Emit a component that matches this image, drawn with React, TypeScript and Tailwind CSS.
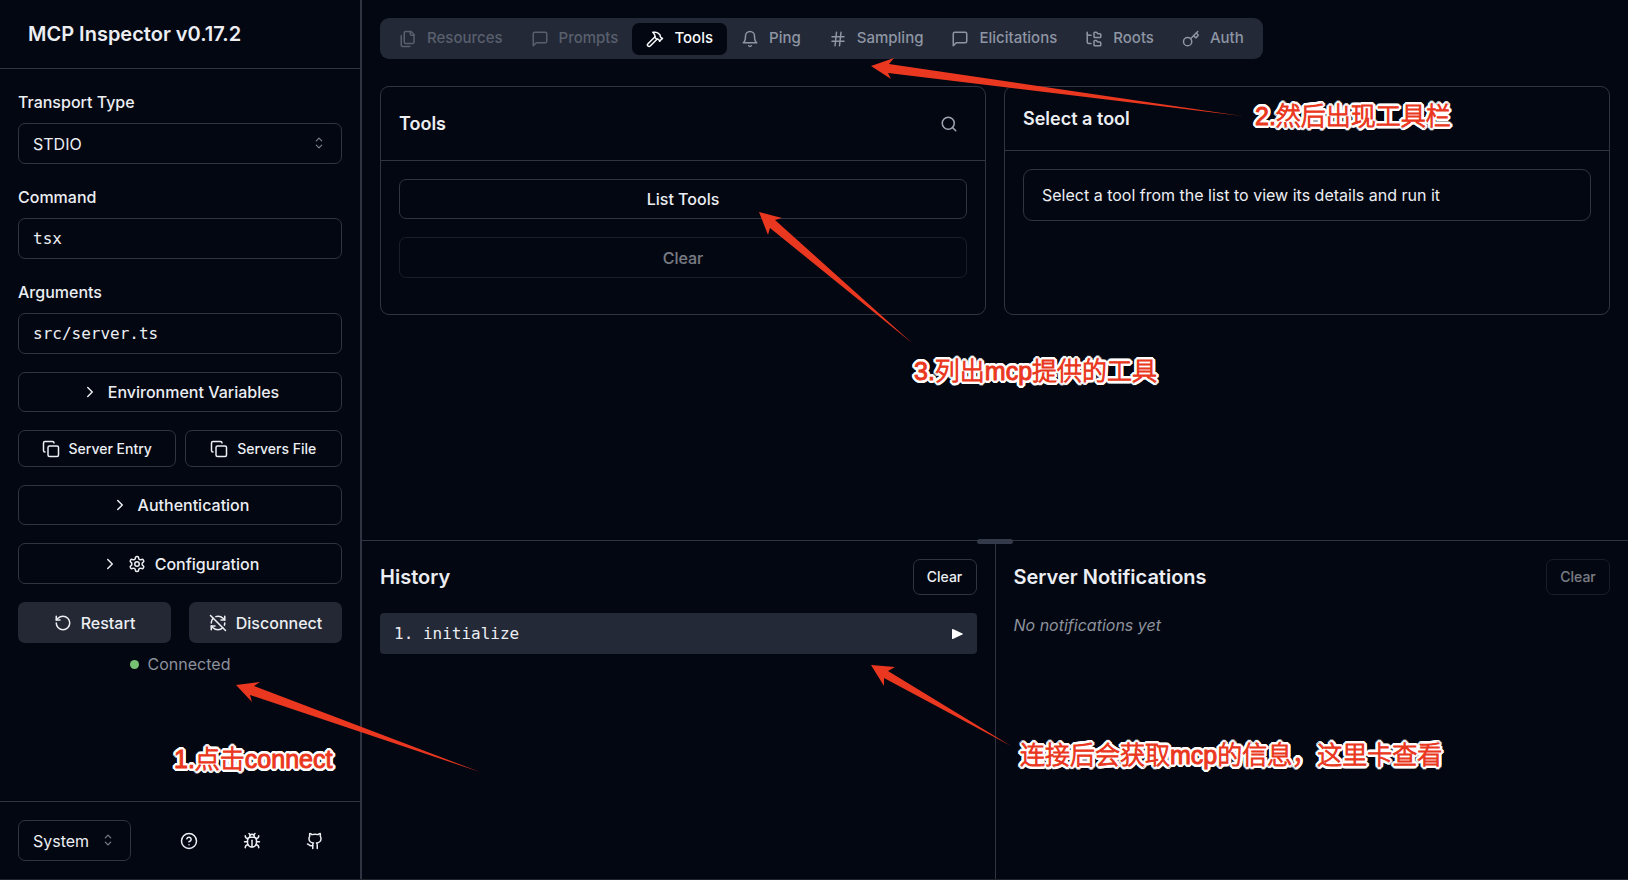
import { useState } from 'react'
import type { ReactNode } from 'react'
import { Bug, ChevronRight, CircleHelp, Copy, FolderTree, Github, Hammer, Hash, Key, RefreshCwOff, RotateCcw, Search } from 'lucide-react'
import clsx from 'clsx'

type IconProps = { className?: string }

function makeIcon(...paths: string[]) {
  return function Icon({ className }: IconProps) {
    return (
      <svg
        viewBox="0 0 24 24"
        fill="none"
        stroke="currentColor"
        strokeWidth="2"
        strokeLinecap="round"
        strokeLinejoin="round"
        className={className}
      >
        {paths.map((d) => (
          <path key={d} d={d} />
        ))}
      </svg>
    )
  }
}

const Files = makeIcon(
  'M20 7h-3a2 2 0 0 1-2-2V2',
  'M9 18a2 2 0 0 1-2-2V4a2 2 0 0 1 2-2h7l4 4v10a2 2 0 0 1-2 2Z',
  'M3 7.6v12.8A1.6 1.6 0 0 0 4.6 22h9.8',
)
const MessageSquare = makeIcon('M21 15a2 2 0 0 1-2 2H7l-4 4V5a2 2 0 0 1 2-2h14a2 2 0 0 1 2 2z')
const Bell = makeIcon('M6 8a6 6 0 0 1 12 0c0 7 3 9 3 9H3s3-2 3-9', 'M10.3 21a1.94 1.94 0 0 0 3.4 0')
const Settings = makeIcon(
  'M12.22 2h-.44a2 2 0 0 0-2 2v.18a2 2 0 0 1-1 1.73l-.43.25a2 2 0 0 1-2 0l-.15-.08a2 2 0 0 0-2.73.73l-.22.38a2 2 0 0 0 .73 2.73l.15.1a2 2 0 0 1 1 1.72v.51a2 2 0 0 1-1 1.74l-.15.09a2 2 0 0 0-.73 2.73l.22.38a2 2 0 0 0 2.73.73l.15-.08a2 2 0 0 1 2 0l.43.25a2 2 0 0 1 1 1.73V20a2 2 0 0 0 2 2h.44a2 2 0 0 0 2-2v-.18a2 2 0 0 1 1-1.73l.43-.25a2 2 0 0 1 2 0l.15.08a2 2 0 0 0 2.73-.73l.22-.39a2 2 0 0 0-.73-2.73l-.15-.08a2 2 0 0 1-1-1.74v-.5a2 2 0 0 1 1-1.74l.15-.09a2 2 0 0 0 .73-2.73l-.22-.38a2 2 0 0 0-2.73-.73l-.15.08a2 2 0 0 1-2 0l-.43-.25a2 2 0 0 1-1-1.73V4a2 2 0 0 0-2-2z',
  'M15 12a3 3 0 1 1-6 0 3 3 0 0 1 6 0z',
)

const tabs = [
  { id: 'resources', label: 'Resources', icon: Files, disabled: true },
  { id: 'prompts', label: 'Prompts', icon: MessageSquare, disabled: true },
  { id: 'tools', label: 'Tools', icon: Hammer },
  { id: 'ping', label: 'Ping', icon: Bell },
  { id: 'sampling', label: 'Sampling', icon: Hash },
  { id: 'elicitations', label: 'Elicitations', icon: MessageSquare },
  { id: 'roots', label: 'Roots', icon: FolderTree },
  { id: 'auth', label: 'Auth', icon: Key },
]

const arrows = [
  '236,685 260,682 254,686 480,772 250,695 252,702',
  '871,66 894,58 889,64 1242,116 888,73 891,79',
  '759,212 782,218 775,220 912,343 770,228 768,235',
  '871,665 895,667 888,671 1011,746 884,678 884,686',
]

const notes = [
  { text: '1.点击connect', className: 'left-[174px] top-[741px]' },
  { text: '2.然后出现工具栏', className: 'left-[1255px] top-[98px]' },
  { text: '3.列出mcp提供的工具', className: 'left-[914px] top-[353px]' },
  { text: '连接后会获取mcp的信息，这里卡查看', className: 'left-[1020px] top-[737px]' },
]

function CaretSort() {
  return (
    <svg
      viewBox="0 0 24 24"
      fill="none"
      stroke="currentColor"
      strokeWidth="1.6"
      strokeLinecap="round"
      strokeLinejoin="round"
      className="pointer-events-none absolute right-3.5 top-[11px] h-[18px] w-[18px] text-[#7b8089]"
    >
      <path d="m8.4 9.2 3.6-3.6 3.6 3.6" />
      <path d="m8.4 14.8 3.6 3.6 3.6-3.6" />
    </svg>
  )
}

function Field({ id, label, children }: { id: string; label: string; children: ReactNode }) {
  return (
    <div className="flex flex-col gap-[9px]">
      <label htmlFor={id} className="leading-6 font-medium">
        {label}
      </label>
      {children}
    </div>
  )
}

function OutlineButton({
  children,
  className,
  disabled,
}: {
  children: ReactNode
  className?: string
  disabled?: boolean
}) {
  return (
    <button
      disabled={disabled}
      className={clsx(
        'flex items-center justify-center rounded-[7px] border border-[#2f3443] font-medium disabled:opacity-50',
        className,
      )}
    >
      {children}
    </button>
  )
}

function Sidebar() {
  const [command, setCommand] = useState('tsx')
  const [args, setArgs] = useState('src/server.ts')

  return (
    <aside className="flex w-[362px] shrink-0 flex-col border-r-2 border-[#2f3443]">
      <div className="flex h-[69px] items-center border-b border-[#2f3443] px-7">
        <h1 className="text-xl font-semibold">MCP Inspector v0.17.2</h1>
      </div>

      <div className="flex flex-1 flex-col gap-[18px] px-[18px] pt-[21px]">
        <div className="flex flex-col gap-[21px]">
          <Field id="transport" label="Transport Type">
            <div className="relative">
              <select
                id="transport"
                className="h-[41px] w-full appearance-none rounded-[7px] border border-[#2f3443] bg-transparent px-3.5"
              >
                <option>STDIO</option>
                <option>SSE</option>
              </select>
              <CaretSort />
            </div>
          </Field>
          <Field id="command" label="Command">
            <input
              id="command"
              value={command}
              onChange={(e) => setCommand(e.target.value)}
              className="h-[41px] w-full rounded-[7px] border border-[#2f3443] bg-transparent px-3.5 font-['DejaVu_Sans_Mono',monospace]"
            />
          </Field>
          <Field id="arguments" label="Arguments">
            <input
              id="arguments"
              value={args}
              onChange={(e) => setArgs(e.target.value)}
              className="h-[41px] w-full rounded-[7px] border border-[#2f3443] bg-transparent px-3.5 font-['DejaVu_Sans_Mono',monospace]"
            />
          </Field>
        </div>

        <OutlineButton className="h-10 gap-[9px]">
          <ChevronRight className="h-[18px] w-[18px]" />
          Environment Variables
        </OutlineButton>
        <div className="grid grid-cols-2 gap-[9px]">
          <OutlineButton className="h-[37px] gap-[9px] text-sm">
            <Copy className="h-[18px] w-[18px]" />
            Server Entry
          </OutlineButton>
          <OutlineButton className="h-[37px] gap-[9px] text-sm">
            <Copy className="h-[18px] w-[18px]" />
            Servers File
          </OutlineButton>
        </div>
        <OutlineButton className="h-10 gap-[9px]">
          <ChevronRight className="h-[18px] w-[18px]" />
          Authentication
        </OutlineButton>
        <OutlineButton className="h-[41px] gap-[9px]">
          <ChevronRight className="h-[18px] w-[18px]" />
          <Settings className="h-[18px] w-[18px]" />
          Configuration
        </OutlineButton>

        <div>
          <div className="grid grid-cols-2 gap-[18px]">
            <button className="flex h-[41px] items-center justify-center gap-[9px] rounded-[7px] bg-[#232834] font-medium">
              <RotateCcw className="h-[18px] w-[18px]" />
              Restart
            </button>
            <button className="flex h-[41px] items-center justify-center gap-[9px] rounded-[7px] bg-[#232834] font-medium">
              <RefreshCwOff className="h-[18px] w-[18px]" />
              Disconnect
            </button>
          </div>
          <div className="mt-[9px] flex items-center justify-center gap-[9px]">
            <span className="h-[9px] w-[9px] rounded-full bg-[#77c172]" />
            <span className="leading-6 text-[#8c919c]">Connected</span>
          </div>
        </div>
      </div>

      <div className="flex items-center justify-between border-t border-[#2f3443] p-[18px]">
        <div className="relative">
          <select
            aria-label="Theme"
            className="h-[41px] w-[113px] appearance-none rounded-[7px] border border-[#2f3443] bg-transparent px-3.5"
          >
            <option>System</option>
            <option>Light</option>
            <option>Dark</option>
          </select>
          <CaretSort />
        </div>
        <div className="flex gap-[9px]">
          <button aria-label="Help" className="flex h-[41px] w-[54px] items-center justify-center">
            <CircleHelp className="h-[18px] w-[18px]" />
          </button>
          <button aria-label="Report a bug" className="flex h-[41px] w-[54px] items-center justify-center">
            <Bug className="h-[18px] w-[18px]" />
          </button>
          <button aria-label="GitHub" className="flex h-[41px] w-[54px] items-center justify-center">
            <Github className="h-[18px] w-[18px]" />
          </button>
        </div>
      </div>
    </aside>
  )
}

function ToolsPanel() {
  const [active, setActive] = useState('tools')

  return (
    <div className="flex-1 p-[18px]">
      <div role="tablist" className="inline-flex h-[41px] items-center rounded-[9px] bg-[#232937] p-[5px]">
        {tabs.map(({ id, label, icon: Icon, disabled }) => (
          <button
            key={id}
            role="tab"
            aria-selected={active === id}
            disabled={disabled}
            onClick={() => setActive(id)}
            className={clsx(
              'flex h-8 items-center gap-2.5 rounded-[7px] px-3.5 text-[15px] font-medium disabled:opacity-50',
              active === id ? 'bg-[#030712] text-[#f8fafc]' : 'text-[#8e95a3]',
            )}
          >
            <Icon className="h-[18px] w-[18px]" />
            {label}
          </button>
        ))}
      </div>

      <div className="mt-[27px] grid grid-cols-2 gap-[18px]">
        <section className="rounded-[9px] border border-[#2f3443] pb-9">
          <div className="flex h-[74px] items-center justify-between border-b border-[#2f3443] px-[18px]">
            <h3 className="text-lg font-semibold">Tools</h3>
            <button aria-label="Search tools" className="p-[9px] text-[#a0a6b3]">
              <Search className="h-[18px] w-[18px]" />
            </button>
          </div>
          <div className="flex flex-col gap-[18px] px-[18px] pt-[18px]">
            <OutlineButton className="h-10">List Tools</OutlineButton>
            <OutlineButton className="h-[41px]" disabled>
              Clear
            </OutlineButton>
          </div>
        </section>
        <section className="rounded-[9px] border border-[#2f3443]">
          <div className="flex h-16 items-center border-b border-[#2f3443] px-[18px]">
            <h3 className="text-lg font-semibold">Select a tool</h3>
          </div>
          <div className="p-[18px]">
            <div className="rounded-[9px] border border-[#2f3443] px-[18px] py-[13px] leading-6">
              Select a tool from the list to view its details and run it
            </div>
          </div>
        </section>
      </div>
    </div>
  )
}

function HistoryPanel() {
  return (
    <div className="relative flex h-[339px] border-t border-[#2f3443]">
      <div className="absolute -top-0.5 left-1/2 h-[5px] w-9 -translate-x-1/2 rounded-sm bg-[#343a49]" />
      <section className="flex-1 border-r border-[#2f3443] p-[18px]">
        <div className="mb-[18px] flex items-center justify-between">
          <h2 className="text-xl font-semibold">History</h2>
          <OutlineButton className="h-9 w-16 text-sm">Clear</OutlineButton>
        </div>
        <ul>
          <li className="flex h-[41px] items-center justify-between rounded-[4px] bg-[#232937] px-3.5">
            <span className="font-['DejaVu_Sans_Mono',monospace]">1. initialize</span>
            <svg viewBox="0 0 11 10" className="h-[10px] w-[11px] fill-white">
              <path d="M0 .6C0 .1.4-.1.9.1l9.5 4.3c.6.3.6.9 0 1.2L.9 9.9C.4 10.1 0 9.9 0 9.4Z" />
            </svg>
          </li>
        </ul>
      </section>
      <section className="flex-1 p-[18px]">
        <div className="mb-[18px] flex items-center justify-between">
          <h2 className="text-xl font-semibold">Server Notifications</h2>
          <OutlineButton className="h-9 w-16 text-sm" disabled>
            Clear
          </OutlineButton>
        </div>
        <p className="leading-6 text-[#8c919c] italic">No notifications yet</p>
      </section>
    </div>
  )
}

// Step by step hints drawn above the inspector
function Annotations() {
  return (
    <div className="pointer-events-none absolute inset-0 overflow-hidden">
      <svg width="1628" height="880" viewBox="0 0 1628 880" className="absolute left-0 top-0 max-w-none fill-[#ea3720]">
        {arrows.map((points) => (
          <polygon key={points} points={points} />
        ))}
      </svg>
      {notes.map((note) => (
        <span
          key={note.text}
          className={clsx(
            "absolute font-['Liberation_Sans','Noto_Sans_CJK_SC',sans-serif] text-[25px] leading-9 font-light whitespace-nowrap text-[#ea3720] [-webkit-text-stroke:1px_#ea3720] [text-shadow:3px_0_white,-3px_0_white,0_3px_white,0_-3px_white,3px_1px_white,3px_-1px_white,-3px_1px_white,-3px_-1px_white,1px_3px_white,1px_-3px_white,-1px_3px_white,-1px_-3px_white,2px_2px_white,2px_-2px_white,-2px_2px_white,-2px_-2px_white,1px_1px_white,-1px_-1px_white]",
            note.className,
          )}
        >
          {note.text}
        </span>
      ))}
    </div>
  )
}

export default function App() {
  return (
    <div className="relative flex min-h-screen border-b border-[#22252b] bg-[#030712] font-['Inter',sans-serif] text-base text-[#eceef2]">
      <Sidebar />
      <main className="flex min-w-0 flex-1 flex-col">
        <ToolsPanel />
        <HistoryPanel />
      </main>
      <Annotations />
    </div>
  )
}
